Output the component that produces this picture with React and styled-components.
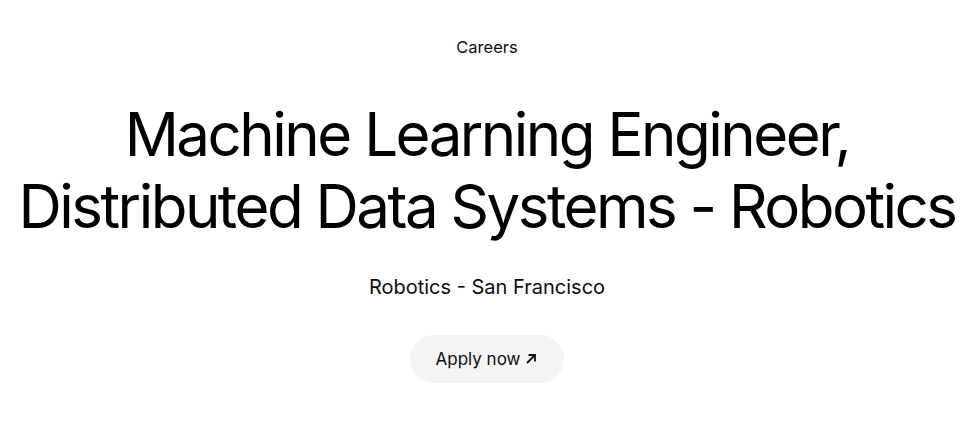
import React from "react";
import styled, { createGlobalStyle } from "styled-components";

const Global = createGlobalStyle`
  html, body { margin: 0; padding: 0; background: #fff; }
  body { font-family: Inter, "Noto Sans", sans-serif; color: #0d0d0d; -webkit-font-smoothing: antialiased; }
`;

const Hero = styled.section`
  display: flex;
  flex-direction: column;
  align-items: center;
  text-align: center;
  padding-top: 36px;
`;

const Eyebrow = styled.a`
  font-size: 16.5px;
  line-height: 22px;
  color: #0d0d0d;
  text-decoration: none;
`;

const Title = styled.h1`
  margin: 40px 0 0;
  font-size: 60px;
  line-height: 72px;
  font-weight: 400;
  letter-spacing: -2.5px;
  white-space: nowrap;
  color: #000;
`;

const Meta = styled.p`
  margin: 31px 0 0;
  font-size: 20px;
  line-height: 28px;
`;

const Pill = styled.a`
  margin-top: 34px;
  display: inline-flex;
  align-items: center;
  gap: 4px;
  height: 48px;
  padding: 0 26px;
  border-radius: 24px;
  background: #f4f4f4;
  color: #0d0d0d;
  font-size: 17px;
  text-decoration: none;
`;

const Arrow = () => (
  <svg width="14" height="14" viewBox="0 0 14 14" fill="none" stroke="currentColor" strokeWidth="1.8">
    <path d="M3 11 L11 3 M4.5 3 H11 V9.5" />
  </svg>
);

export default function App() {
  return (
    <>
      <Global />
      <Hero>
        <Eyebrow href="#">Careers</Eyebrow>
        <Title>
          Machine Learning Engineer,
          <br />
          Distributed Data Systems - Robotics
        </Title>
        <Meta>Robotics - San Francisco</Meta>
        <Pill href="#">
          Apply now <Arrow />
        </Pill>
      </Hero>
    </>
  );
}
